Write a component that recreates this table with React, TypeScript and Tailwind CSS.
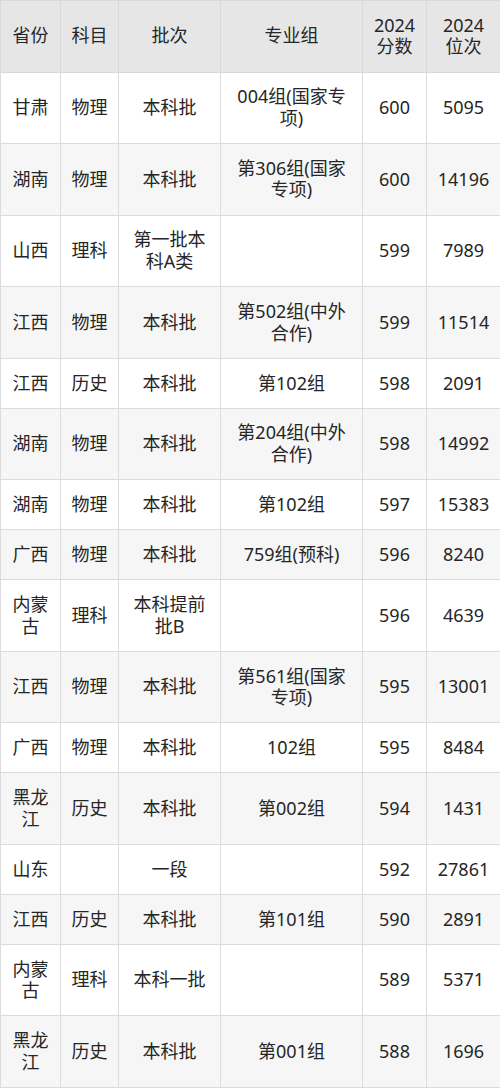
import React from "react";

const header = ["省份", "科目", "批次", "专业组", "2024\n分数", "2024\n位次"];

const rows: string[][] = [
  ["甘肃", "物理", "本科批", "004组(国家专项)", "600", "5095"],
  ["湖南", "物理", "本科批", "第306组(国家专项)", "600", "14196"],
  ["山西", "理科", "第一批本科A类", "", "599", "7989"],
  ["江西", "物理", "本科批", "第502组(中外合作)", "599", "11514"],
  ["江西", "历史", "本科批", "第102组", "598", "2091"],
  ["湖南", "物理", "本科批", "第204组(中外合作)", "598", "14992"],
  ["湖南", "物理", "本科批", "第102组", "597", "15383"],
  ["广西", "物理", "本科批", "759组(预科)", "596", "8240"],
  ["内蒙古", "理科", "本科提前批B", "", "596", "4639"],
  ["江西", "物理", "本科批", "第561组(国家专项)", "595", "13001"],
  ["广西", "物理", "本科批", "102组", "595", "8484"],
  ["黑龙江", "历史", "本科批", "第002组", "594", "1431"],
  ["山东", "", "一段", "", "592", "27861"],
  ["江西", "历史", "本科批", "第101组", "590", "2891"],
  ["内蒙古", "理科", "本科一批", "", "589", "5371"],
  ["黑龙江", "历史", "本科批", "第001组", "588", "1696"],
];

export default function App() {
  return (
    <div
      className="w-[500px] bg-white"
      style={{ fontFamily: '"Noto Sans", "Noto Sans CJK SC", sans-serif' }}
    >
      <table className="w-[500px] table-fixed border-collapse text-[18px] leading-[21.6px] text-[#262626]">
        <colgroup>
          <col className="w-[60px]" />
          <col className="w-[58px]" />
          <col className="w-[102px]" />
          <col className="w-[142px]" />
          <col className="w-[64px]" />
          <col className="w-[74px]" />
        </colgroup>
        <thead>
          <tr className="bg-[#e6e6e6]">
            {header.map((h, i) => (
              <th
                key={i}
                className="border border-[#d9d9d9] px-[8px] py-[13.7px] text-center font-normal whitespace-pre-line"
              >
                {h}
              </th>
            ))}
          </tr>
        </thead>
        <tbody>
          {rows.map((r, i) => (
            <tr key={i} className={i % 2 === 1 ? "bg-[#f6f6f6]" : "bg-white"}>
              {r.map((c, j) => (
                <td
                  key={j}
                  className="border border-[#dcdcdc] px-[8px] py-[13.7px] text-center align-middle break-all"
                >
                  {c}
                </td>
              ))}
            </tr>
          ))}
        </tbody>
      </table>
    </div>
  );
}
